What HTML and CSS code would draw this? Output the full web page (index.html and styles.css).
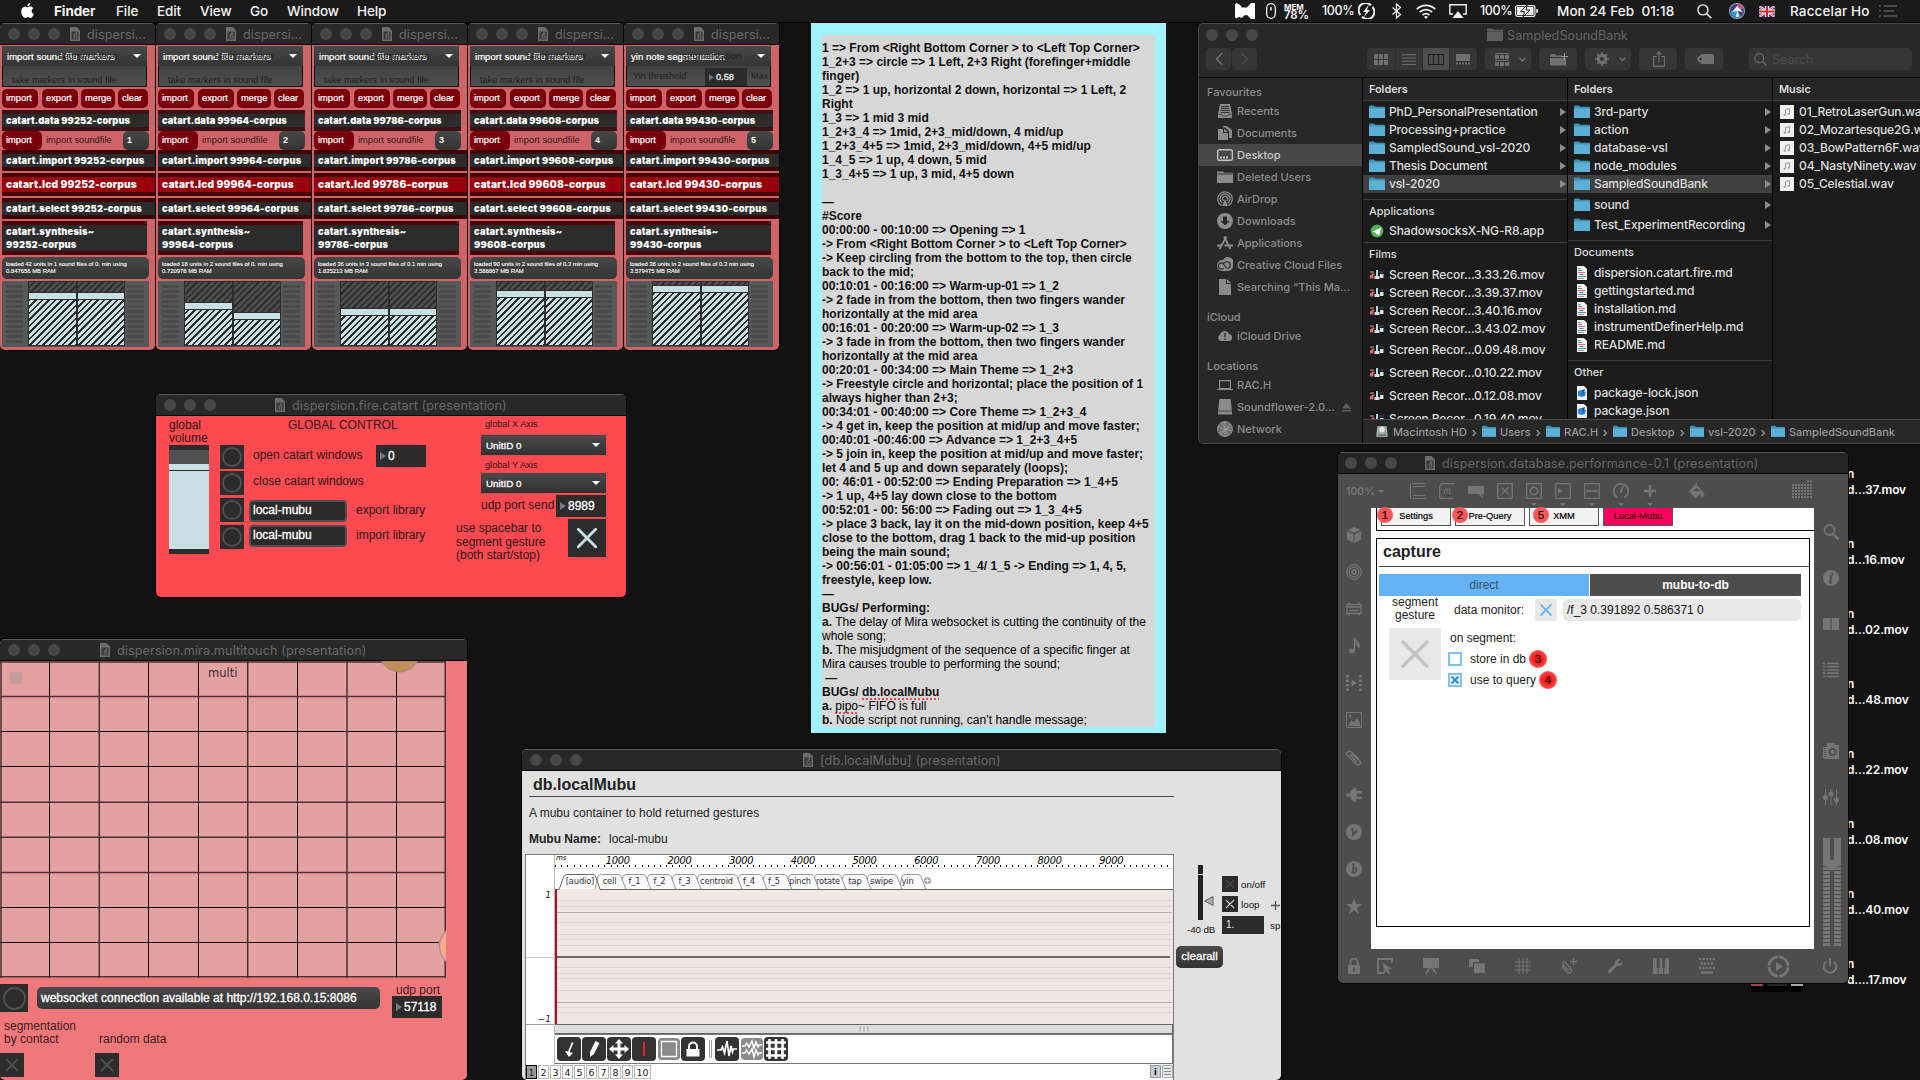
FILE: index.html
```html
<!DOCTYPE html>
<html lang="en">
<head>
<meta charset="utf-8">
<title>Desktop</title>
<link rel="stylesheet" href="styles.css">
</head>
<body>
<svg class="sprite" aria-hidden="true">
  <symbol id="doc" viewBox="0 0 10 14"><path d="M0 0h6.500L10 3.500V14H0z" fill="#6d6d6d"/><path d="M1.500 4.500h7v8h-7z" fill="#3a3a3a"/><path d="M6.500 5 4 9M5.500 8.500a1.500 1.500 0 1 1-1.500 1.500c0-1.500 3-2 2.500-4" fill="none" stroke="#777" stroke-width=".8"/></symbol>
  <symbol id="x" viewBox="0 0 24 24"><path d="M6.500 6.500l11 11M17.500 6.500l-11 11" fill="none" stroke="currentColor" stroke-width="1.800" stroke-linecap="round"/></symbol>
  <symbol id="folder" viewBox="0 0 16 14"><path d="M0 1.500Q0 .5 1 .5h4l1.500 1.300H15q1 0 1 1V13H0z" fill="#3d93b8"/><path d="M0 3.500h16V13H0z" fill="#5cb0d6"/></symbol>
  <symbol id="gfolder" viewBox="0 0 16 14"><path d="M0 1.500Q0 .5 1 .5h4l1.500 1.300H16V13H0z" fill="#5f5f5f"/><path d="M0 3.500h16" stroke="#444" stroke-width=".8"/></symbol>
  <symbol id="mov" viewBox="0 0 14 10"><path d="M0 0h14v9H0z" fill="#111"/><path d="M0 1h4v2H0z" fill="#8a5557"/><path d="M0 5h3.500v3.500H0zM1.500 3.500h3v1.500h-3z" fill="#d9686c"/><path d="M6 0h2v6H6z" fill="#a6e5ec"/><path d="M4.500 6h5v3h-5zM10 4h3.500v4H10z" fill="#ddd"/><path d="M9 .5h5v3H9z" fill="#333"/></symbol>
  <symbol id="wav" viewBox="0 0 14 14"><path d="M0 0h14v14H0z" fill="#efefef"/><path d="M5.500 9.700V4.500l4-.8v5.200" fill="none" stroke="#999"/><circle cx="4.700" cy="9.800" r="1.100" fill="#999"/><circle cx="8.700" cy="9" r="1.100" fill="#999"/></symbol>
  <symbol id="md" viewBox="0 0 10 14"><path d="M0 0h7l3 3v11H0z" fill="#f2f2f2"/><path d="M1 2.500h3M1 12.500h6" stroke="#999"/><path d="M1 4.500h4M1 10.500h8" stroke="#3a9aa8"/><path d="M1 6.500h7" stroke="#e2666a"/><path d="M2.500 8.500h4" stroke="#7a63d8"/></symbol>
  <symbol id="json" viewBox="0 0 10 14"><path d="M0 0h7l3 3v11H0z" fill="#f2f2f2"/><path d="M1 5l3-1 5 2-1 4-3 1-4-1z" fill="#2b84dd"/><path d="M5 4l3-1-2 6z" fill="#174f93"/></symbol>
  <symbol id="play" viewBox="0 0 6 8"><path d="M0 0l6 4-6 4z" fill="currentColor"/></symbol>
  <symbol id="down" viewBox="0 0 8 4"><path d="M0 0h8L4 4z" fill="currentColor"/></symbol>
</svg>

<header class="menubar">
  <svg class="apple" viewBox="0 0 13 15"><path d="M9.200 0c.1 1.700-1.200 3.200-2.800 3.300C6.200 1.700 7.600.2 9.200 0zM6.700 4.300c.5 0 1.400-.7 2.700-.7 1.200 0 2.300.7 2.900 1.600-2.500 1.500-2 4.800.6 5.800-.8 2-2 3.900-3.400 3.900-1 0-1.300-.6-2.600-.6s-1.700.6-2.600.6C2.400 14.900.2 11.600.2 8.500c0-3 2-4.800 3.800-4.800 1.200 0 2.100.6 2.700.6z" fill="#fff"/></svg>
  <nav class="menus"><b class="m1">Finder</b><span class="m2">File</span><span class="m3">Edit</span><span class="m4">View</span><span class="m5">Go</span><span class="m6">Window</span><span>Help</span></nav>
  <div class="status">
    <svg class="s-cam" width="20" height="16" viewBox="0 0 20 16"><path d="M0 1.500L1.500 0 5 2l2 2.500h5L16 0h4v16h-4l-4-4-3 .5L7 15l-3-1-3 1.500L0 14z" fill="#fff"/></svg>
    <svg class="s-mouse" width="10" height="16" viewBox="0 0 10 16"><rect x=".7" y=".7" width="8.600" height="14.600" rx="4.300" fill="none" stroke="#eee" stroke-width="1.300"/><path d="M5 4v3.500" stroke="#eee" stroke-width="1.500"/></svg>
    <span class="mem"><span>MEM</span><span>78%</span></span>
    <span class="pct p1">100%</span>
    <svg class="s-bolt" width="17" height="16" viewBox="0 0 17 16"><path d="M13 2.200A6.800 6.800 0 0 0 2.500 12M4 13.800A6.800 6.800 0 0 0 14.500 4" fill="none" stroke="#eee" stroke-width="2"/><path d="M11 1.500L5 9h3l-2.500 5.500L12 7H9z" fill="#eee"/></svg>
    <svg class="s-bt" width="11" height="16" viewBox="0 0 11 16"><path d="M1.500 4.500l8 7-4 3.500V1l4 3.500-8 7" fill="none" stroke="#eee" stroke-width="1.200"/></svg>
    <svg class="s-wifi" width="20" height="15" viewBox="0 0 20 15"><g fill="none" stroke="#eee" stroke-width="1.800"><path d="M.8 5.200a13 13 0 0 1 18.400 0M3.800 8.200a8.800 8.800 0 0 1 12.400 0M6.600 11a4.800 4.800 0 0 1 6.800 0"/></g><path d="M10 15l-2-2.200a3 3 0 0 1 4 0z" fill="#eee"/></svg>
    <svg class="s-air" width="18" height="14" viewBox="0 0 18 14"><path d="M4 10H.8V.8h16.400V10H14" fill="none" stroke="#eee" stroke-width="1.400"/><path d="M9 7l5.500 7h-11z" fill="#eee"/></svg>
    <span class="pct p2">100%</span>
    <svg class="s-bat" width="23" height="12" viewBox="0 0 23 12"><rect x=".6" y=".6" width="19.300" height="10.800" rx="2" fill="none" stroke="#eee" stroke-width="1.200"/><path d="M21.200 4a2 2 0 0 1 0 4z" fill="#eee"/><path d="M2 2h16.500v8H2z" fill="#eee"/><path d="M12 0L5.500 6.700h4L8 12l7-7h-4z" fill="#eee" stroke="#1a1a1a"/></svg>
    <span class="clock">Mon 24 Feb&nbsp; 01:18</span>
    <svg class="s-find" width="15" height="15" viewBox="0 0 15 15"><circle cx="5.900" cy="5.900" r="5" fill="none" stroke="#eee" stroke-width="1.400"/><path d="M9.500 9.500l4.800 4.800" stroke="#eee" stroke-width="1.600"/></svg>
    <svg class="s-siri" width="16" height="16" viewBox="0 0 16 16"><circle cx="8" cy="8" r="8" fill="#9ba0b8"/><circle cx="8" cy="8" r="7" fill="#3d3f7c"/><path d="M8 1a7 7 0 0 1 6.500 4.500L8 8z" fill="#c04f88"/><path d="M1.500 8.500L8 8l4 5.500a7 7 0 0 1-8 0z" fill="#2c9fc8"/><path d="M8 3l6 6-5-1 1 6H7l1-6-5 1z" fill="#e8f2fa"/></svg>
    <svg class="s-flag" width="16" height="11" viewBox="0 0 16 11"><path d="M0 0h16v11H0z" fill="#2a3f8f"/><path d="M0 0l16 11M16 0L0 11" stroke="#fff" stroke-width="2.200"/><path d="M0 0l16 11M16 0L0 11" stroke="#d22" stroke-width=".8"/><path d="M8 0v11M0 5.500h16" stroke="#fff" stroke-width="4"/><path d="M8 0v11M0 5.500h16" stroke="#d8202f" stroke-width="2.200"/></svg>
    <span class="user">Raccelar Ho</span>
    <svg class="s-list" width="18" height="12" viewBox="0 0 18 12"><path d="M0 1h2M0 6h2M0 11h2M4.500 1H18M4.500 6H15M4.500 11H18" stroke="#5a5a5a" stroke-width="1.600"/></svg>
  </div>
</header>

<main class="desktop">

<section class="win catart" style="left:0">
  <div class="bar"><i></i><i></i><i></i><svg class="doc"><use href="#doc"/></svg><span>dispersi...</span></div>
  <div class="cbody">
    <div class="menu"><span>import sound file markers</span><em>segmentation</em><svg><use href="#down"/></svg></div>
    <div class="mbox"><span>take markers in sound file</span></div>
    <div class="btns"><b>import</b><b>export</b><b>merge</b><b>clear</b></div>
    <div class="strip s1">catart.data 99252-corpus</div>
    <div class="imp"><b>import</b><span>import soundfile</span><strong>1</strong></div>
    <div class="strip wide">catart.import 99252-corpus</div>
    <div class="strip wide lcd">catart.lcd 99252-corpus</div>
    <div class="strip wide">catart.select 99252-corpus</div>
    <div class="strip syn">catart.synthesis~<br>99252-corpus</div>
    <div class="info">loaded 42 units in 1 sound files of 0. min using<br>0.847656 MB RAM</div>
    <div class="mix"><i class="lad"></i><div class="sl"><u style="height:10px"></u></div><div class="sl"><u style="height:10px"></u></div><i class="lad"></i></div>
  </div>
</section>

<section class="win catart" style="left:156px">
  <div class="bar"><i></i><i></i><i></i><svg class="doc"><use href="#doc"/></svg><span>dispersi...</span></div>
  <div class="cbody">
    <div class="menu"><span>import sound file markers</span><em>segmentation</em><svg><use href="#down"/></svg></div>
    <div class="mbox"><span>take markers in sound file</span></div>
    <div class="btns"><b>import</b><b>export</b><b>merge</b><b>clear</b></div>
    <div class="strip s1">catart.data 99964-corpus</div>
    <div class="imp"><b>import</b><span>import soundfile</span><strong>2</strong></div>
    <div class="strip wide">catart.import 99964-corpus</div>
    <div class="strip wide lcd">catart.lcd 99964-corpus</div>
    <div class="strip wide">catart.select 99964-corpus</div>
    <div class="strip syn">catart.synthesis~<br>99964-corpus</div>
    <div class="info">loaded 18 units in 2 sound files of 0. min using<br>0.720978 MB RAM</div>
    <div class="mix"><i class="lad"></i><div class="sl"><u style="height:20px"></u></div><div class="sl"><u style="height:30px"></u></div><i class="lad"></i></div>
  </div>
</section>

<section class="win catart" style="left:312px">
  <div class="bar"><i></i><i></i><i></i><svg class="doc"><use href="#doc"/></svg><span>dispersi...</span></div>
  <div class="cbody">
    <div class="menu"><span>import sound file markers</span><em>segmentation</em><svg><use href="#down"/></svg></div>
    <div class="mbox"><span>take markers in sound file</span></div>
    <div class="btns"><b>import</b><b>export</b><b>merge</b><b>clear</b></div>
    <div class="strip s1">catart.data 99786-corpus</div>
    <div class="imp"><b>import</b><span>import soundfile</span><strong>3</strong></div>
    <div class="strip wide">catart.import 99786-corpus</div>
    <div class="strip wide lcd">catart.lcd 99786-corpus</div>
    <div class="strip wide">catart.select 99786-corpus</div>
    <div class="strip syn">catart.synthesis~<br>99786-corpus</div>
    <div class="info">loaded 36 units in 3 sound files of 0.1 min using<br>1.835213 MB RAM</div>
    <div class="mix"><i class="lad"></i><div class="sl"><u style="height:26px"></u></div><div class="sl"><u style="height:26px"></u></div><i class="lad"></i></div>
  </div>
</section>

<section class="win catart" style="left:468px">
  <div class="bar"><i></i><i></i><i></i><svg class="doc"><use href="#doc"/></svg><span>dispersi...</span></div>
  <div class="cbody">
    <div class="menu"><span>import sound file markers</span><em>segmentation</em><svg><use href="#down"/></svg></div>
    <div class="mbox"><span>take markers in sound file</span></div>
    <div class="btns"><b>import</b><b>export</b><b>merge</b><b>clear</b></div>
    <div class="strip s1">catart.data 99608-corpus</div>
    <div class="imp"><b>import</b><span>import soundfile</span><strong>4</strong></div>
    <div class="strip wide">catart.import 99608-corpus</div>
    <div class="strip wide lcd">catart.lcd 99608-corpus</div>
    <div class="strip wide">catart.select 99608-corpus</div>
    <div class="strip syn">catart.synthesis~<br>99608-corpus</div>
    <div class="info">loaded 90 units in 2 sound files of 0.3 min using<br>3.588867 MB RAM</div>
    <div class="mix"><i class="lad"></i><div class="sl"><u style="height:8px"></u></div><div class="sl"><u style="height:8px"></u></div><i class="lad"></i></div>
  </div>
</section>

<section class="win catart" style="left:624px">
  <div class="bar"><i></i><i></i><i></i><svg class="doc"><use href="#doc"/></svg><span>dispersi...</span></div>
  <div class="cbody">
    <div class="menu"><span>yin note segmentation</span><em>segmentation</em><svg><use href="#down"/></svg></div>
    <div class="mbox yin"><span>Yin threshold</span><b><svg><use href="#play"/></svg>0.58</b><span>Max</span></div>
    <div class="btns"><b>import</b><b>export</b><b>merge</b><b>clear</b></div>
    <div class="strip s1">catart.data 99430-corpus</div>
    <div class="imp"><b>import</b><span>import soundfile</span><strong>5</strong></div>
    <div class="strip wide">catart.import 99430-corpus</div>
    <div class="strip wide lcd">catart.lcd 99430-corpus</div>
    <div class="strip wide">catart.select 99430-corpus</div>
    <div class="strip syn">catart.synthesis~<br>99430-corpus</div>
    <div class="info">loaded 38 units in 2 sound files of 0.3 min using<br>3.579475 MB RAM</div>
    <div class="mix"><i class="lad"></i><div class="sl"><u style="height:3px"></u></div><div class="sl"><u style="height:3px"></u></div><i class="lad"></i></div>
  </div>
</section>

<section class="win fire">
  <div class="bar"><i></i><i></i><i></i><svg class="doc"><use href="#doc"/></svg><span>dispersion.fire.catart (presentation)</span></div>
  <div class="fbody">
    <div class="fa"><p>global<br>volume</p><div class="vol"><i></i><b></b></div></div>
    <div class="fb"><i class="bang"></i><i class="bang"></i><i class="bang"></i><i class="bang"></i></div>
    <div class="fc">
      <h2>GLOBAL CONTROL</h2>
      <div class="r1"><span>open catart windows</span><b class="num"><svg><use href="#play"/></svg>0</b></div>
      <div class="r2"><span>close catart windows</span></div>
      <div class="r3"><b class="msg">local-mubu</b><span>export library</span></div>
      <div class="r4"><b class="msg">local-mubu</b><span>import library</span></div>
    </div>
    <div class="fd">
      <small class="gx">global X Axis</small>
      <div class="umenu">UnitID 0<svg><use href="#down"/></svg></div>
      <small class="gy">global Y Axis</small>
      <div class="umenu">UnitID 0<svg><use href="#down"/></svg></div>
      <div class="port"><span>udp port send</span><b class="num"><svg><use href="#play"/></svg>8989</b></div>
      <div class="space"><p>use spacebar to<br>segment gesture<br>(both start/stop)</p><svg class="tog"><use href="#x"/></svg></div>
    </div>
  </div>
</section>

<section class="win mira">
  <div class="bar"><i></i><i></i><i></i><svg class="doc"><use href="#doc"/></svg><span>dispersion.mira.multitouch (presentation)</span></div>
  <div class="pad">
    <svg width="446" height="317" viewBox="0 0 446 317">
      <path d="M0 0h446v317H0z" fill="#e3a1a2"/>
      <rect x="10" y="11" width="12" height="12" rx="2" fill="#c19a9a" stroke="#cf9d9e"/>
      <g stroke="#170c0c"><path d="M49.500 0v317M148.500 0v317M198.500 0v317M297.500 0v317M396.500 0v317"/><path d="M0 70.500h446M0 105.500h446M0 246.500h446M0 281.500h446"/></g>
      <g stroke="#4b2f31" stroke-width="1.500"><path d="M1 0v317M99.300 0v317M247.700 0v317M347 0v317M445.200 0v317"/><path d="M0 1h446M0 35.500h446M0 141.200h446M0 176.300h446M0 211.500h446M0 315.800h446"/></g>
      <circle cx="399.500" cy="-9" r="20" fill="#c18d5c" stroke="#9b8a80"/>
      <circle cx="459.500" cy="285" r="20" fill="#ffac8c" stroke="#b0908c" stroke-width="1.500"/>
    </svg>
    <span>multi</span>
  </div>
  <div class="mrow"><i class="bang"></i><b class="ws">websocket connection available at http://192.168.0.15:8086</b><div><span>udp port</span><b class="num"><svg><use href="#play"/></svg>57118</b></div></div>
  <div class="mrow2"><div><p>segmentation<br>by contact</p><svg class="tog"><use href="#x"/></svg></div><div class="rnd"><p><br>random data</p><svg class="tog"><use href="#x"/></svg></div></div>
</section>

<section class="note"><div><b>1 =&gt; From &lt;Right Bottom Corner &gt; to &lt;Left Top Corner&gt;
1_2+3 =&gt; circle =&gt; 1 Left, 2+3 Right (forefinger+middle
finger)
1_2 =&gt; 1 up, horizontal 2 down, horizontal =&gt; 1 Left, 2
Right
1_3 =&gt; 1 mid 3 mid
1_2+3_4 =&gt; 1mid, 2+3_mid/down, 4 mid/up
1_2+3_4+5 =&gt; 1mid, 2+3_mid/down, 4+5 mid/up
1_4_5 =&gt; 1 up, 4 down, 5 mid
1_3_4+5 =&gt; 1 up, 3 mid, 4+5 down

—
#Score
00:00:00 - 00:10:00 =&gt; Opening =&gt; 1
-&gt; From &lt;Right Bottom Corner &gt; to &lt;Left Top Corner&gt;
-&gt; Keep circling from the bottom to the top, then circle
back to the mid;
00:10:01 - 00:16:00 =&gt; Warm-up-01 =&gt; 1_2
-&gt; 2 fade in from the bottom, then two fingers wander
horizontally at the mid area
00:16:01 - 00:20:00 =&gt; Warm-up-02 =&gt; 1_3
-&gt; 3 fade in from the bottom, then two fingers wander
horizontally at the mid area
00:20:01 - 00:34:00 =&gt; Main Theme =&gt; 1_2+3
-&gt; Freestyle circle and horizontal; place the position of 1
always higher than 2+3;
00:34:01 - 00:40:00 =&gt; Core Theme =&gt; 1_2+3_4
-&gt; 4 get in, keep the position at mid/up and move faster;
00:40:01 -00:46:00 =&gt; Advance =&gt; 1_2+3_4+5
-&gt; 5 join in, keep the position at mid/up and move faster;
let 4 and 5 up and down separately (loops);
00: 46:01 - 00:52:00 =&gt; Ending Preparation =&gt; 1_4+5
-&gt; 1 up, 4+5 lay down close to the bottom
00:52:01 - 00: 56:00 =&gt; Fading out =&gt; 1_3_4+5
-&gt; place 3 back, lay it on the mid-down position, keep 4+5
close to the bottom, drag 1 back to the mid-up position
being the main sound;
-&gt; 00:56:01 - 01:05:00 =&gt; 1_4/ 1_5 -&gt; Ending =&gt; 1, 4, 5,
freestyle, keep low.
—
BUGs/ Performing:
a.</b> The delay of Mira websocket is cutting the continuity of the
whole song;
<b>b.</b> The misjudgment of the sequence of a specific finger at
Mira causes trouble to performing the sound;
 <b>—
BUGs/ <u>db.localMubu</u>
a.</b> <u>pipo</u>~ FIFO is full
<b>b.</b> Node script not running, can’t handle message;</div></section>

<section class="win finder">
  <div class="ftitle"><i></i><i></i><i></i><svg width="16" height="14"><use href="#gfolder"/></svg><span>SampledSoundBank</span></div>
  <div class="ftools">
    <span class="tb back"><svg width="8" height="14" viewBox="0 0 8 14"><path d="M7 1.500L1.500 7 7 12.500" fill="none" stroke="#6f6f6f" stroke-width="1.600"/></svg></span>
    <span class="tb fwd"><svg width="8" height="14" viewBox="0 0 8 14"><path d="M1 1.500L6.500 7 1 12.500" fill="none" stroke="#4a4a4a" stroke-width="1.600"/></svg></span>
    <div class="views">
      <span><svg width="14" height="11" viewBox="0 0 14 11"><path d="M0 0h4v5H0zM5 0h4v5H5zM10 0h4v5h-4zM0 6h4v5H0zM5 6h4v5H5zM10 6h4v5h-4z" fill="#707070"/></svg></span>
      <span><svg width="14" height="11" viewBox="0 0 14 11"><path d="M0 .7h14M0 4h14M0 7.200h14M0 10.400h14" stroke="#707070"/></svg></span>
      <span class="on"><svg width="16" height="11" viewBox="0 0 16 11"><path d="M.5.5h15v10H.5zM5.500 0v11M10.500 0v11" fill="none" stroke="#1d1d1d"/></svg></span>
      <span><svg width="14" height="11" viewBox="0 0 14 11"><path d="M0 0h14v7H0zM0 8.500h2v2H0zM3 8.500h2v2H3zM6 8.500h2v2H6zM9 8.500h2v2H9zM12 8.500h2v2h-2z" fill="#707070"/></svg></span>
    </div>
    <span class="tb grp"><svg width="31" height="13" viewBox="0 0 31 13"><path d="M0 0h14v1H0zM0 2h4v4H0zM5 2h4v4H5zM10 2h4v4h-4zM0 7h14v1H0zM0 9h4v4H0zM5 9h4v4H5zM10 9h4v4h-4z" fill="#707070"/><path d="M24.500 5l3 3 3-3" fill="none" stroke="#707070" stroke-width="1.300"/></svg></span>
    <span class="tb nf"><svg width="18" height="13" viewBox="0 0 18 13"><path d="M0 2q0-1 1-1h4l1 1.500h6V5h4v7.500H0z" fill="#707070"/><path d="M0 4.500h12" stroke="#333"/><path d="M14.500 0v7M11 3.500h7" stroke="#999"/></svg></span>
    <span class="tb grp"><svg width="31" height="14" viewBox="0 0 31 14"><circle cx="7" cy="7" r="3.800" fill="none" stroke="#707070" stroke-width="3"/><path d="M7 0v14M0 7h14M2 2l10 10M12 2L2 12" stroke="#707070" stroke-width="1.600"/><circle cx="7" cy="7" r="2" fill="#333"/><path d="M24.500 5.500l3 3 3-3" fill="none" stroke="#707070" stroke-width="1.300"/></svg></span>
    <span class="tb nf"><svg width="12" height="16" viewBox="0 0 12 16"><path d="M4 5.500H.6v9.900h10.800V5.500H8M6 11V1M3.500 3.500L6 1l2.500 2.500" fill="none" stroke="#707070" stroke-width="1.100"/></svg></span>
    <span class="tb nf"><svg width="17" height="10" viewBox="0 0 17 10"><path d="M5 0h10.500Q17 0 17 1.500v7q0 1.500-1.500 1.500H5L1 7Q-.5 5 1 3z" fill="#707070"/><circle cx="3.700" cy="5" r="1.200" fill="#333"/></svg></span>
    <div class="search"><svg width="13" height="13" viewBox="0 0 13 13"><circle cx="5.200" cy="5.200" r="4.500" fill="none" stroke="#6a6a6a" stroke-width="1.200"/><path d="M8.500 8.500l4 4" stroke="#6a6a6a" stroke-width="1.300"/></svg>Search</div>
  </div>
  <div class="fmain">
    <aside>
      <h4>Favourites</h4>
      <p><svg viewBox="0 0 16 16"><path d="M3 1h10l2 10v4H1v-4z" fill="#8b8b8b"/><path d="M4 3.500h8M4 5.500h8M3.500 7.500h9M3.500 9.500h9" stroke="#333"/><path d="M1.500 11.500h3l1 1.500h5l1-1.500h3" fill="none" stroke="#333" stroke-width=".8"/></svg>Recents</p>
      <p><svg viewBox="0 0 16 16"><path d="M1 4h5v4h5v7H1zM7 3.500L11 7H7zM6 1h4l5 4v8h-3V6L8 2.500H6z" fill="#8b8b8b"/></svg>Documents</p>
      <p class="on"><svg viewBox="0 0 16 16"><rect x=".7" y="2.700" width="14.600" height="10.600" rx="1.500" fill="none" stroke="#c4c4c4" stroke-width="1.400"/><path d="M3 9.500h2v2H3zM6 9.500h2v2H6zM9 9.500h2v2H9z" fill="#c4c4c4"/></svg>Desktop</p>
      <p><svg viewBox="0 0 16 16"><path d="M0 2.500h6l1.500 1.200H16V14H0z" fill="#8b8b8b"/><path d="M0 5h16" stroke="#333"/></svg>Deleted Users</p>
      <p><svg viewBox="0 0 16 16"><g fill="none" stroke="#8b8b8b" stroke-width="1.300"><path d="M4.500 14.500a7.300 7.300 0 1 1 7 0M5.300 12a5 5 0 1 1 5.400 0M6.500 9.800a2.600 2.600 0 1 1 3 0"/></g><path d="M8 8l3 7H5z" fill="#8b8b8b"/></svg>AirDrop</p>
      <p><svg viewBox="0 0 16 16"><circle cx="8" cy="8" r="8" fill="#8b8b8b"/><path d="M6 3.500h4V8h2.500L8 12.500 3.500 8H6z" fill="#282828"/></svg>Downloads</p>
      <p><svg viewBox="0 0 16 16"><path d="M9.500 1.500L2.500 14M7 1.500L13.500 14M0 10.500h5M7.500 10.500H16" fill="none" stroke="#8b8b8b" stroke-width="1.900"/></svg>Applications</p>
      <p><svg viewBox="0 0 16 16"><path d="M0 8.500A5.500 5.500 0 0 1 6 3a5 5 0 0 1 10 5.500A5 5 0 0 1 11 14H5a5 5 0 0 1-5-5.500z" fill="#8b8b8b"/><path d="M10 11.500L6 6.500a3 3 0 1 0 0 5h1M6.500 7.500a3.400 3.400 0 1 1 4 4" fill="none" stroke="#2c2c2c" stroke-width="1.200"/></svg>Creative Cloud Files</p>
      <p><svg viewBox="0 0 16 16"><path d="M2 0h7v5h5v11H2zM10 0l4 4h-4z" fill="#8b8b8b"/></svg>Searching “This Ma...</p>
      <h4 class="ic">iCloud</h4>
      <p><svg viewBox="0 0 16 16"><path d="M3.500 13A3.300 3.300 0 0 1 2.800 7 5 5 0 0 1 12.200 6 3.600 3.600 0 0 1 12.500 13z" fill="#8b8b8b"/><path d="M8 5v4M8 10.500v1.500" stroke="#222" stroke-width="1.300"/></svg>iCloud Drive</p>
      <h4 class="ic">Locations</h4>
      <p><svg viewBox="0 0 16 16"><path d="M2.600 3.600h10.800v8H2.600zM0 12.500h16" fill="none" stroke="#8b8b8b" stroke-width="1.200"/></svg>RAC.H</p>
      <p><svg viewBox="0 0 16 16"><path d="M2.500 0h11L15 12v3.500H1V12z" fill="#8b8b8b"/><path d="M1 12h14" stroke="#333" stroke-width=".8"/></svg>Soundflower-2.0...<svg class="ej" viewBox="0 0 9 9"><path d="M4.500 0L9 5.500H0zM0 7h9v1.500H0z" fill="#5f5f5f"/></svg></p>
      <p><svg viewBox="0 0 16 16"><circle cx="8" cy="8" r="7.500" fill="#6f6f6f" stroke="#8b8b8b"/><path d="M1 6l14 4M5 1l6 14M13 3L4 14M8 0v16M2 12l12-6" stroke="#a5a5a5" stroke-width=".7"/></svg>Network</p>
    </aside>
    <div class="cols">
      <div class="colset">
        <div class="col c1">
          <h5 class="hd">Folders</h5>
          <p><svg><use href="#folder"/></svg>PhD_PersonalPresentation<svg class="ar"><use href="#play"/></svg></p>
          <p><svg><use href="#folder"/></svg>Processing+practice<svg class="ar"><use href="#play"/></svg></p>
          <p><svg><use href="#folder"/></svg>SampledSound_vsl-2020<svg class="ar"><use href="#play"/></svg></p>
          <p><svg><use href="#folder"/></svg>Thesis Document<svg class="ar"><use href="#play"/></svg></p>
          <p class="sel"><svg><use href="#folder"/></svg>vsl-2020<svg class="ar"><use href="#play"/></svg></p>
          <h5 class="sub a1">Applications</h5>
          <p class="app"><svg viewBox="0 0 16 16"><circle cx="8" cy="8" r="7.300" fill="#4fae53"/><path d="M2.500 8.500L13 4l-2.500 9-2.700-2L7 13l-.7-3z" fill="#fff"/></svg>ShadowsocksX-NG-R8.app</p>
          <h5 class="sub a2">Films</h5>
          <p class="mv"><svg><use href="#mov"/></svg>Screen Recor...3.33.26.mov</p>
          <p class="mv"><svg><use href="#mov"/></svg>Screen Recor...3.39.37.mov</p>
          <p class="mv"><svg><use href="#mov"/></svg>Screen Recor...3.40.16.mov</p>
          <p class="mv"><svg><use href="#mov"/></svg>Screen Recor...3.43.02.mov</p>
          <p class="mv g3"><svg><use href="#mov"/></svg>Screen Recor...0.09.48.mov</p>
          <p class="mv g5"><svg><use href="#mov"/></svg>Screen Recor...0.10.22.mov</p>
          <p class="mv g5"><svg><use href="#mov"/></svg>Screen Recor...0.12.08.mov</p>
          <p class="mv g5"><svg><use href="#mov"/></svg>Screen Recor...0.19.40.mov</p>
        </div>
        <div class="col c2">
          <h5 class="hd">Folders</h5>
          <p><svg><use href="#folder"/></svg>3rd-party<svg class="ar"><use href="#play"/></svg></p>
          <p><svg><use href="#folder"/></svg>action<svg class="ar"><use href="#play"/></svg></p>
          <p><svg><use href="#folder"/></svg>database-vsl<svg class="ar"><use href="#play"/></svg></p>
          <p><svg><use href="#folder"/></svg>node_modules<svg class="ar"><use href="#play"/></svg></p>
          <p class="sel"><svg><use href="#folder"/></svg>SampledSoundBank<svg class="ar"><use href="#play"/></svg></p>
          <p class="g3"><svg><use href="#folder"/></svg>sound<svg class="ar"><use href="#play"/></svg></p>
          <p class="g2"><svg><use href="#folder"/></svg>Test_ExperimentRecording<svg class="ar"><use href="#play"/></svg></p>
          <h5 class="sub b1">Documents</h5>
          <p><svg><use href="#md"/></svg>dispersion.catart.fire.md</p>
          <p><svg><use href="#md"/></svg>gettingstarted.md</p>
          <p><svg><use href="#md"/></svg>installation.md</p>
          <p><svg><use href="#md"/></svg>instrumentDefinerHelp.md</p>
          <p><svg><use href="#md"/></svg>README.md</p>
          <h5 class="sub b1">Other</h5>
          <p><svg><use href="#json"/></svg>package-lock.json</p>
          <p><svg><use href="#json"/></svg>package.json</p>
        </div>
        <div class="col c3">
          <h5 class="hd">Music</h5>
          <p><svg><use href="#wav"/></svg>01_RetroLaserGun.wav</p>
          <p><svg><use href="#wav"/></svg>02_Mozartesque2G.wav</p>
          <p><svg><use href="#wav"/></svg>03_BowPattern6F.wav</p>
          <p><svg><use href="#wav"/></svg>04_NastyNinety.wav</p>
          <p><svg><use href="#wav"/></svg>05_Celestial.wav</p>
        </div>
      </div>
      <footer>
        <span class="w1"><svg viewBox="0 0 12 14"><path d="M1 1h10l1 8v4H0V9z" fill="#9aa5a5"/><circle cx="6" cy="5" r="3" fill="#dfe6e6"/><path d="M2 11h8" stroke="#444"/></svg>Macintosh HD</span><em>›</em>
        <span class="w2"><svg><use href="#folder"/></svg>Users</span><em>›</em>
        <span class="w3"><svg><use href="#folder"/></svg>RAC.H</span><em>›</em>
        <span class="w4"><svg><use href="#folder"/></svg>Desktop</span><em>›</em>
        <span class="w5"><svg><use href="#folder"/></svg>vsl-2020</span><em>›</em>
        <span class="w6"><svg><use href="#folder"/></svg>SampledSoundBank</span>
      </footer>
    </div>
  </div>
</section>

<ul class="icons">
  <li>n<br>d...37.mov</li><li>n<br>d...16.mov</li><li>n<br>d...02.mov</li><li>n<br>d...48.mov</li><li>n<br>d...22.mov</li><li>n<br>d...08.mov</li><li>n<br>d...40.mov</li><li>n<br>d....17.mov</li>
</ul>
<div class="thumb"><i></i><b></b><u></u></div>

<section class="win perf">
  <div class="bar"><i></i><i></i><i></i><svg class="doc"><use href="#doc"/></svg><span>dispersion.database.performance-0.1 (presentation)</span></div>
  <div class="ptools">
    <span class="zoom">100%</span><svg class="zd"><use href="#down"/></svg>
    <svg class="pi" viewBox="0 0 16 22"><path d="M.5 3v16M2.500 3.500h13M2.500 18.500h13M3 6.500h12M3 15.500h12" stroke="#757575"/></svg>
    <svg class="pi" viewBox="0 0 16 22"><path d="M16 3.700H3L.7 6v12.300H14" fill="none" stroke="#757575" stroke-width="1.300"/><path d="M5 14l1.300-5.500M6 10q2.500-2.500 2.500 0L7.500 14M8.500 10q2.500-2.500 2.500 0l-1 4h1.500" fill="none" stroke="#757575"/></svg>
    <svg class="pi" viewBox="0 0 16 22"><path d="M0 6h16v8h-1.500v4L10.500 14H0z" fill="#757575"/></svg>
    <svg class="pi" viewBox="0 0 16 22"><path d="M.7 3.700h14.600v14.600H.7zM4.500 7.500l7 7M11.500 7.500l-7 7" fill="none" stroke="#757575" stroke-width="1.300"/></svg>
    <svg class="pi dn" viewBox="0 0 16 27"><path d="M.7 3.700h14.600v14.600H.7z" fill="none" stroke="#757575" stroke-width="1.300"/><circle cx="8" cy="11" r="3.700" fill="none" stroke="#757575" stroke-width="1.500"/><path d="M5 23h6l-3 3z" fill="#757575"/></svg>
    <svg class="pi dn" viewBox="0 0 16 27"><path d="M.7 3.700h14.600v14.600H.7z" fill="none" stroke="#757575" stroke-width="1.300"/><path d="M3 8l5 3-5 3zM5 23h6l-3 3z" fill="#757575"/></svg>
    <svg class="pi dn" viewBox="0 0 16 27"><path d="M.7 3.700h14.600v14.600H.7zM2 11h12" fill="none" stroke="#757575" stroke-width="1.300"/><path d="M5 23h6l-3 3z" fill="#757575"/></svg>
    <svg class="pi dn" viewBox="0 0 16 27"><path d="M4.500 17.500a7.300 7.300 0 1 1 7 0M7.500 13L10 6" fill="none" stroke="#757575" stroke-width="1.800"/><path d="M5 23h6l-3 3z" fill="#757575"/></svg>
    <svg class="pi dn" viewBox="0 0 16 27"><path d="M8 5v12M2 11h12" stroke="#757575" stroke-width="2.500"/><path d="M5 23h6l-3 3z" fill="#757575"/></svg>
    <svg class="pi pb" viewBox="0 0 16 22"><path d="M1 11l7-6 6 7-7 6zM14 12q3 5 0 5t0-5M8 5V3M4 7l4-4" fill="#757575" stroke="#757575"/><path d="M4 11l4-3 4 3z" fill="#4d4d4d"/></svg>
    <svg class="pg" viewBox="0 0 20 19"><path d="M0 5h20M0 8h20M0 11h20M0 14h20M0 17h20M15 1.500h5" stroke="#757575" stroke-width="2" stroke-dasharray="2 1"/></svg>
  </div>
  <div class="pmid">
    <div class="pl">
      <svg viewBox="0 0 16 16"><path d="M8 0l6.500 3L8 6 1.500 3zM.8 4.200L7.500 7.300V16L.8 12.500zM15.200 4.200L8.500 7.300V16l6.700-3.500z" fill="#757575"/></svg>
      <svg viewBox="0 0 16 16"><g fill="none" stroke="#757575" stroke-width="1.300"><circle cx="8" cy="8" r="7.300"/><circle cx="8" cy="8" r="5"/></g><circle cx="8" cy="8" r="2" fill="none" stroke="#757575" stroke-width="1.800"/></svg>
      <svg viewBox="0 0 16 16"><path d="M1 3.500h14v9H1zM1 6h14M3 9.500h10M2 13.500h2M12 13.500h2M2 2.500h2M12 2.500h2" fill="none" stroke="#757575" stroke-width="1.300"/></svg>
      <svg viewBox="0 0 16 16"><path d="M8.500 12V0q0 3 3.500 4.500 2 2 .5 5 0-3-3-4" fill="none" stroke="#757575" stroke-width="1.500"/><ellipse cx="6" cy="13" rx="3" ry="2.300" fill="#757575"/></svg>
      <svg viewBox="0 0 16 16"><path d="M1.500 0v16M14.500 0v16" stroke="#757575" stroke-width="3" stroke-dasharray="2.500 2"/><path d="M5 8h2M5.500 4.500L11 8l-5.500 3.500z" fill="#757575"/></svg>
      <svg viewBox="0 0 16 16"><path d="M.5.500h15v15H.5z" fill="none" stroke="#757575"/><path d="M2 14l3.500-6L8 10.500 10.500 6 14 11v3z" fill="#757575"/><circle cx="4" cy="4" r="1.200" fill="#757575"/></svg>
      <svg viewBox="0 0 16 16"><path d="M13 9L7 3.500Q4 0 1.500 2T3 7l7 7q2.500 2 4 0t-1-4L7 5.500Q5 4 4.500 5.500L11 12" fill="none" stroke="#757575" stroke-width="1.300"/></svg>
      <svg viewBox="0 0 16 16"><path d="M0 6.500h4Q5 2 10 .5V4h6v2.500h-5v3h5V12h-6v3.500Q5 14 4 9.500H0z" fill="#757575"/></svg>
      <svg viewBox="0 0 16 16"><circle cx="8" cy="8" r="8" fill="#757575"/><path d="M5 5.500l1.500-.5L7 11q4-3 3.500-5.500" fill="none" stroke="#4d4d4d" stroke-width="1.800"/></svg>
      <svg viewBox="0 0 16 16"><circle cx="8" cy="8" r="8" fill="#757575"/><path d="M6 3h1.800L6.300 12q4 0 4-4 0-2-3 0" fill="none" stroke="#4d4d4d" stroke-width="1.700"/></svg>
      <svg viewBox="0 0 16 16"><path d="M8 0l2 6h6l-5 3.700L13 16l-5-3.800L3 16l2-6.300L0 6h6z" fill="#757575"/></svg>
    </div>
    <div class="canvas">
      <div class="ptabs">
        <span>Settings</span><span>Pre-Query</span><span>XMM</span><span class="lm">Local-Mubu</span>
        <em class="bd n1">1</em><em class="bd n2">2</em><em class="bd n5">5</em>
      </div>
      <div class="cap">
        <h3>capture</h3>
        <div class="dtabs"><span>direct</span><b>mubu-to-db</b></div>
        <div class="dm"><p>segment<br>gesture</p><span>data monitor:</span><svg class="t1"><use href="#x"/></svg><div>/f_3 0.391892 0.586371 0</div></div>
        <div class="os">
          <svg viewBox="0 0 52 52"><path d="M13 13l26 26M39 13L13 39" stroke="#c4c4c4" stroke-width="3.500"/></svg>
          <div><p>on segment:</p>
            <label><i></i>store in db<em class="bd big">3</em></label>
            <label><i><svg viewBox="0 0 10 10"><path d="M1.500 1.500l7 7M8.500 1.500l-7 7" stroke="#2490f0" stroke-width="2.300"/></svg></i>use to query<em class="bd big">4</em></label>
          </div>
        </div>
      </div>
    </div>
    <div class="pr">
      <svg viewBox="0 0 16 16"><circle cx="6.500" cy="6" r="5" fill="none" stroke="#757575" stroke-width="1.800"/><path d="M10 10l5.500 5.500" stroke="#757575" stroke-width="2.400"/></svg>
      <svg viewBox="0 0 16 16"><circle cx="8" cy="8" r="8" fill="#757575"/><path d="M9.500 3l-.3 2M6.500 6.500l2-.3L7 12.500h2" fill="none" stroke="#4d4d4d" stroke-width="1.800"/></svg>
      <svg viewBox="0 0 16 16"><path d="M0 2h7.500v12H0zM8.500 2H16v12H8.500z" fill="#757575"/></svg>
      <svg viewBox="0 0 16 16"><path d="M0 1.500h2.500M0 4.700h2.500M0 8h2.500M0 11.200h2.500M0 14.500h2.500M4 1.500h12M4 4.700h12M4 8h12M4 11.200h12M4 14.500h12" stroke="#757575" stroke-width="1.700"/></svg>
      <svg class="cam" viewBox="0 0 16 16"><path d="M4 0h8v2h4v14H0V4h4z" fill="#757575"/><circle cx="9.500" cy="9" r="4" fill="#4d4d4d"/><circle cx="9.500" cy="9" r="2.200" fill="#757575"/><path d="M2 5v9" stroke="#4d4d4d" stroke-width="2" stroke-dasharray="1"/></svg>
      <svg viewBox="0 0 16 16"><path d="M2.500 0v16M8 0v16M13.500 0v16" stroke="#757575"/><ellipse cx="2.500" cy="8.500" rx="2.500" ry="2.500" fill="#757575"/><circle cx="8" cy="5" r="2.500" fill="#757575"/><circle cx="13.500" cy="11" r="2.500" fill="#757575"/></svg>
      <svg class="meter" viewBox="0 0 18 108"><path d="M3.500 0v25M14.500 0v25" stroke="#757575" stroke-width="7"/><path d="M3.500 25v83M14.500 25v83" stroke="#757575" stroke-width="7" stroke-dasharray="3 1"/><circle cx="9" cy="27" r="5.500" fill="#757575"/></svg>
    </div>
  </div>
  <div class="pbot">
    <svg class="q1" viewBox="0 0 16 16"><path d="M2 7h12v9H2z" fill="#757575"/><path d="M4.500 7V4a3.500 3.500 0 0 1 7 0v3" fill="none" stroke="#757575" stroke-width="1.800"/><path d="M8 9.500V14" stroke="#4d4d4d" stroke-width="1.600"/></svg>
    <svg class="q2" viewBox="0 0 16 16"><path d="M15 5V1H1v14h6" fill="none" stroke="#757575" stroke-width="1.800"/><path d="M6 5l9 6-4 .5L14 16l-2 .5L9.500 13 7 15.500z" fill="#757575"/></svg>
    <svg class="q3" viewBox="0 0 16 16"><path d="M0 0h16v10H0z" fill="#757575"/><path d="M7.500 9L3 15.500M8.500 9l4.500 6.500" stroke="#757575" stroke-width="1.800"/></svg>
    <svg class="q4" viewBox="0 0 16 16"><path d="M0 1h10v3H4v5H0zM5 5.500h11V15H5z" fill="#757575"/></svg>
    <svg class="q5" viewBox="0 0 16 16"><path d="M4 0v16M8 0v16M12 0v16M0 4h16M0 8h16M0 12h16" stroke="#757575"/></svg>
    <svg class="q6" viewBox="0 0 16 16"><path d="M1 8l5 6q2 2 3.500.5T10 11L5 5Q3 3 2 4.500T3 8l5 5M12.500 0v7M9 3.500h7" fill="none" stroke="#757575" stroke-width="1.300"/></svg>
    <svg class="q7" viewBox="0 0 16 16"><path d="M1.500 14.500L10 6" stroke="#757575" stroke-width="3"/><path d="M14 1l-3 3 1 2 3.500-2.500q.5 6-5.500 4.500L8 6q-.5-5 6-5z" fill="#757575"/></svg>
    <svg class="q8" viewBox="0 0 16 16"><path d="M0 0h16v16H0z" fill="#757575"/><path d="M5.200 0v16M10.700 0v16" stroke="#4d4d4d"/><path d="M5.200 0v10M10.700 0v10" stroke="#4d4d4d" stroke-width="3"/></svg>
    <svg class="q9" viewBox="0 0 16 16"><path d="M0 1h16M1.500 5.500h14M0 10h16" stroke="#757575" stroke-width="2.500" stroke-dasharray="2.300 1.100"/><path d="M2 14.500h12" stroke="#757575" stroke-width="2.500"/></svg>
    <svg class="q10" viewBox="0 0 23 23"><circle cx="11.500" cy="11.500" r="9.700" fill="none" stroke="#757575" stroke-width="2.800" stroke-dasharray="13.700 1.500" stroke-dashoffset="-.8"/><path d="M9 7l7 4.500L9 16z" fill="#757575"/></svg>
    <svg class="q11" viewBox="0 0 16 16"><path d="M4 3.500a6.300 6.300 0 1 0 8 0M8 0v8" fill="none" stroke="#757575" stroke-width="2"/></svg>
  </div>
</section>

<section class="win mubu">
  <div class="bar"><i></i><i></i><i></i><svg class="doc"><use href="#doc"/></svg><span>[db.localMubu] (presentation)</span></div>
  <div class="mb">
    <div class="mleft">
      <h3>db.localMubu</h3>
      <p class="desc">A mubu container to hold returned gestures</p>
      <p class="nm"><b>Mubu Name:</b>local-mubu</p>
      <div class="ed">
        <div class="gut"><span>1</span><span>−1</span></div>
        <div class="main">
          <div class="ruler"><small>ms</small><span>1000</span><span>2000</span><span>3000</span><span>4000</span><span>5000</span><span>6000</span><span>7000</span><span>8000</span><span>9000</span></div>
          <div class="tabs">
            <svg width="618" height="21" viewBox="0 0 618 21"><g fill="#fbfbfb" stroke="#999"><path d="M344 20.500l3-13q1-2 3-2h13q2 0 3 2l5 13"/><path d="M310 20.500l3-13q1-2 3-2h23q2 0 3 2l5 13"/><path d="M285 20.500l3-13q1-2 3-2h17q2 0 3 2l5 13"/><path d="M257 20.500l3-13q1-2 3-2h20q2 0 3 2l5 13"/><path d="M231 20.500l3-13q1-2 3-2h19q2 0 3 2l5 13"/><path d="M206 20.500l3-13q1-2 3-2h17q2 0 3 2l5 13"/><path d="M181 20.500l3-13q1-2 3-2h17q2 0 3 2l5 13"/><path d="M140 20.500l3-13q1-2 3-2h33q2 0 3 2l5 13"/><path d="M115 20.500l3-13q1-2 3-2h17q2 0 3 2l5 13"/><path d="M90 20.500l3-13q1-2 3-2h17q2 0 3 2l5 13"/><path d="M65 20.500l3-13q1-2 3-2h17q2 0 3 2l5 13"/><path d="M40 20.500l3-13q1-2 3-2h17q2 0 3 2l5 13"/></g><path d="M0 20.500h4q2-5 4-11 1-4 4-4h26q2 0 3 3l4 12h573" fill="none" stroke="#666"/><circle cx="372.500" cy="11.500" r="3.500" fill="#aaa"/><path d="M370.500 11.500h4M372.500 9.500v4" stroke="#fff"/></svg>
            <div class="tl"><span style="width:50px">[audio]</span><span style="width:9px">cell</span><span style="width:41px">f_1</span><span style="width:9px">f_2</span><span style="width:41px">f_3</span><span style="width:23px">centroid</span><span style="width:42px">f_4</span><span style="width:8px">f_5</span><span style="width:44px">pinch</span><span style="width:12px">rotate</span><span style="width:42px">tap</span><span style="width:11px">swipe</span><span style="width:41px">yin</span></div>
          </div>
          <svg class="wave" width="618" height="135" viewBox="0 0 618 135"><path d="M0 0h618v135H0z" fill="#f0e6e6"/><path d="M0 11.500h617M0 17.500h617M0 33.500h617M0 45.500h617M0 50.500h617M0 56.500h617M0 78.500h617M0 84.500h617M0 89.500h617M0 101.500h617M0 118.500h617M0 123.500h617" stroke="#ddd4d4"/><path d="M0 23.500h617M0 113.500h617" stroke="#b5acac"/><path d="M0 68h615" stroke="#706664" stroke-width="2"/><path d="M1 0v135" stroke="#b0101a" stroke-width="2"/></svg>
          <div class="scroll"><i></i><i></i><i></i></div>
          <div class="tools">
            <svg viewBox="0 0 24 24"><path d="M12 20l-4-6 3 .5 4-9.500 1.500.7-4 9.300 3.500 1z" fill="#fff"/></svg>
            <svg viewBox="0 0 24 24"><path d="M8 20v-5l5.500-11 4 2L12 17z" fill="#fff"/></svg>
            <svg viewBox="0 0 24 24"><path d="M12 2l4 4.500h-2.500V10.500h4V8L22 12l-4.500 4v-2.500h-4v4H16L12 22l-4-4.500h2.500v-4h-4V16L2 12l4.500-4v2.500h4v-4H8z" fill="#fff"/></svg>
            <svg viewBox="0 0 24 24"><path d="M12 5v14" stroke="#f22020" stroke-width="2"/></svg>
            <svg class="gr" viewBox="0 0 22 22"><path d="M3.500 3.500h15v15h-15z" fill="#8a8a8a" stroke="#fff" stroke-width="1.300"/></svg>
            <svg viewBox="0 0 24 24"><path d="M5.500 12h13v7.500h-13z" fill="#fff"/><path d="M8 12V9.500a4 4 0 0 1 8 0V12" fill="none" stroke="#fff" stroke-width="2"/></svg>
            <i class="sep"></i>
            <svg viewBox="0 0 24 24"><path d="M2 13h4l1.500-3 2 6L12 4l2 15 2-10 1.500 6 1-3H22" fill="none" stroke="#fff" stroke-width="1.700"/></svg>
            <svg class="gr" viewBox="0 0 22 22"><path d="M1 8h3l1.500-3L8 9l3-6 2 7 2-6 2 5 1-2h3M1 15h3l1.500-3L8 16l3-5 2 8 2-7 2 5 1-2h3" fill="none" stroke="#fff" stroke-width="1.500"/></svg>
            <svg viewBox="0 0 24 24"><path d="M5.500 2v20M12 2v20M18.500 2v20M2 5.500h20M2 12h20M2 18.500h20" stroke="#fff" stroke-width="2.600"/></svg>
          </div>
        </div>
        <div class="pages"><b>1</b><span>2</span><span>3</span><span>4</span><span>5</span><span>6</span><span>7</span><span>8</span><span>9</span><span class="ten">10</span><em>i</em><svg width="11" height="13" viewBox="0 0 11 13"><path d="M.5.500h10v12H.5z" fill="#e8e8e8" stroke="#aaa"/><path d="M2 3.500h7M2 6.500h7M2 9.500h7" stroke="#888"/></svg></div>
      </div>
    </div>
    <div class="mright">
      <div class="gain"><svg width="16" height="55" viewBox="0 0 16 55"><path d="M0 0h5v55H0z" fill="#222"/><path d="M0 9.500h5" stroke="#ddd"/><path d="M15 31.500v9L6.500 36z" fill="#aaa" stroke="#666"/></svg><span>-40 dB</span></div>
      <div class="opts">
        <p><svg class="tog"><use href="#x"/></svg>on/off</p>
        <p><svg class="tog on"><use href="#x"/></svg>loop<svg class="plus" width="9" height="9" viewBox="0 0 9 9"><path d="M4.500 0v9M0 4.500h9" stroke="#555" stroke-width="1.300"/></svg></p>
        <p class="sp"><b>1.</b>sp</p>
      </div>
      <b class="clr">clearall</b>
    </div>
  </div>
</section>
</main>
</body>
</html>
```
FILE: styles.css
```css
* { box-sizing: border-box; margin: 0; padding: 0; }
html, body { width: 1920px; height: 1080px; overflow: hidden; background: #121212; }
body { font-family: "Liberation Sans", Arial, sans-serif; font-size: 12px; color: #222; white-space: nowrap; }
i, em { font-style: normal; }
svg { display: block; flex: none; }
.sprite { position: absolute; width: 0; height: 0; }

/* menu bar */
.menubar { display: flex; align-items: center; height: 23px; background: #1a1a1a; border-bottom: 1px solid #000; color: #f4f4f4; font: 500 13.5px/22px Inter, sans-serif; padding-left: 21px; }
.apple { width: 13px; height: 15px; margin-bottom: 2px; }
.menus { display: flex; margin-left: 20px; width: 1160px; letter-spacing: -.1px; }
.m1 { width: 62px; }
.m2 { width: 41px; }
.m3 { width: 43px; }
.m4 { width: 50px; }
.m5 { width: 37px; }
.m6 { width: 70px; }
.status { display: flex; align-items: center; flex: 1; margin-left: 21px; }
.s-mouse { margin-left: 11px; }
.mem { display: flex; flex-direction: column; width: 30px; margin-left: 8px; font: 700 8px/8px Inter, sans-serif; }
.mem span + span { font-size: 11.5px; font-weight: 600; line-height: 9px; letter-spacing: -.1px; }
.pct { font-size: 12.5px; width: 36px; letter-spacing: -.4px; }
.p1 { margin-left: 8px; }
.s-bt { margin-left: 16px; }
.s-wifi { margin-left: 14px; }
.s-air { margin-left: 13px; }
.p2 { margin-left: 13px; width: 35px; }
.clock { margin-left: 19px; width: 140px; letter-spacing: .06px; }
.s-siri { margin-left: 17px; }
.s-flag { margin-left: 14px; }
.user { margin-left: 15px; width: 89px; letter-spacing: .15px; }

/* window chrome */
.desktop { position: absolute; inset: 0; }
.win { position: absolute; overflow: hidden; border-radius: 5px; box-shadow: 0 0 0 1px #060606; }
.bar { display: flex; align-items: center; height: 22px; background: #282828; border-top: 1px solid #5c5c5c; border-bottom: 1px solid #050505; padding-left: 8px; font: 400 12.7px/20px Inter, sans-serif; color: #686868; letter-spacing: .07px; }
.bar span { padding-top: 1px; }
.bar i, .ftitle i { width: 12px; height: 12px; border-radius: 50%; background: #474747; margin-right: 8px; flex: none; }
.doc { width: 10px; height: 14px; margin-right: 7px; }

/* catart modules */
.catart { top: 23px; width: 155px; height: 327px; background: #cf6468; }
.catart .doc { margin-left: 2px; }
.cbody { padding: 1px 0 0 2px; }
.menu { display: flex; align-items: center; position: relative; width: 145px; height: 20px; background: linear-gradient(#484848, #343434); color: #fff; font-size: 9.5px; font-weight: 400; padding-left: 5px; letter-spacing: .05px; -webkit-text-stroke: .2px #fff; }
.menu em { position: absolute; left: 56px; top: 4px; color: #202020; font-size: 9.8px; -webkit-text-stroke: 0; }
.menu svg { width: 8px; height: 4px; margin-left: auto; margin-right: 6px; }
.mbox { width: 145px; height: 21px; background: linear-gradient(#424242, #505050); border: 1px solid #111; border-top: 0; padding: 8px 0 0 9px; font-size: 9.2px; line-height: 12px; color: #1f1f1f; }
.yin { display: flex; padding: 2px 0 0 6px; line-height: 16px; overflow: hidden; }
.yin span:first-child { width: 72px; }
.yin b { display: flex; align-items: center; width: 42px; height: 18px; background: #2b2b2b; color: #eee; font-size: 9.2px; padding-left: 4px; margin-right: 4px; font-weight: 400; -webkit-text-stroke: .3px #eee; }
.yin svg { width: 5px; height: 9px; color: #777; margin-right: 2px; }
.btns { display: flex; margin-top: 2px; height: 19px; }
.btns b, .imp b { background: #7a000b; color: #fff; border-radius: 5px; height: 19px; font: 400 9.3px/18px "Liberation Sans", sans-serif; padding-left: 4px; width: 36px; margin-right: 4px; -webkit-text-stroke: .2px #fff; }
.btns b:nth-child(2) { margin-right: 3px; }
.btns b:nth-child(3) { width: 34px; margin-right: 3px; }
.btns b:nth-child(4) { width: 30px; margin: 0; }
.strip { width: 147px; height: 21px; background: #2c2c2c; border: solid #3d1216; border-width: 4px 0; color: #fff; font: 900 9.3px/13px Inter, sans-serif; padding-left: 4px; letter-spacing: .05px; }
.s1 { margin-top: 2px; }
.imp { display: flex; height: 19px; line-height: 18px; font-size: 9.3px; }
.imp b { width: 40px; }
.imp span { width: 77px; color: #331416; }
.imp strong { width: 26px; background: linear-gradient(#484848, #343434); border-radius: 5px; color: #fff; padding-left: 4px; font-size: 9px; }
.wide { width: 153px; border-color: #3b0407; margin-bottom: 2px; letter-spacing: .2px; }
.lcd { height: 23px; background: #98000c; border-color: #45000a; font-size: 10.2px; line-height: 15px; letter-spacing: .15px; }
.catart .syn { width: 145px; height: 34px; border-color: #490509; letter-spacing: .2px; }
.info { width: 147px; height: 22px; margin-top: 2px; border-radius: 5px; background: linear-gradient(#474747, #363636); color: #fff; font-size: 5.9px; line-height: 7px; padding: 4px 0 0 4px; -webkit-text-stroke: .1px #fff; }
.mix { display: flex; width: 147px; height: 66px; margin-top: 2px; background: #585858; }
.lad { width: 17px; height: 58px; margin: 4px 5px 0 4px; background: repeating-linear-gradient(#4a4a4a 0 3px, #585858 3px 5px); }
.sl + .lad { margin-left: 2px; }
.sl { width: 48.500px; height: 65px; border: 1px solid #2d2d2d; background: repeating-linear-gradient(135deg, #c8dfe3 0 3px, #2d2d2d 3px 4.600px); }
.sl u { display: block; background: repeating-linear-gradient(135deg, #4d4d4d 0 3px, #2d2d2d 3px 4.600px); }
.sl::after { content: ""; display: block; height: 6px; background: #c8dfe3; border: solid #2d2d2d; border-width: 1px 0; }

/* shared patcher objects */
.bang { display: flex; align-items: center; justify-content: center; width: 24px; height: 24px; background: #2c2c2c; }
.bang::after { content: ""; width: 16px; height: 16px; border: 2px solid #505050; border-radius: 50%; }
.num { display: flex; align-items: center; width: 50px; height: 22px; background: #2b2b2b; color: #fff; padding-left: 4px; font-size: 12px; font-weight: 400; -webkit-text-stroke: .3px #fff; }
.num svg { width: 6px; height: 12px; color: #777; margin-right: 2px; }
.tog { width: 24px; height: 24px; background: #2c2c2c; color: #505050; }

/* global control */
.fire { left: 156px; top: 394px; width: 470px; height: 203px; background: #fc4a50; }
.fire .doc { margin-left: 51px; }
.fbody { display: flex; padding: 3px 0 0 13px; color: #2c1517; }
.fa p { line-height: 13px; }
.vol { width: 40px; height: 109px; border: solid #2c2c2c; border-width: 5px 0; background: #c8dfe3; }
.vol i { display: block; height: 14px; background: #505050; }
.vol b { display: block; height: 7px; border-bottom: 1px solid #2c2c2c; }
.fb { display: grid; grid-template-rows: 26px 27px 27px 24px; margin: 26px 5px 0 11px; }
.fc { width: 207px; }
.fc h2 { font: 400 12px/13px "Liberation Sans", sans-serif; margin-left: 39px; height: 26px; }
.fc div { display: flex; }
.r1 { height: 26px; line-height: 20px; padding-left: 4px; }
.r1 span { width: 123px; }
.r2 { height: 29px; line-height: 20px; padding-left: 4px; }
.r3, .r4 { height: 25px; line-height: 20px; }
.msg { width: 98px; height: 22px; background: #2b2b2b; border: 2px solid #505050; border-radius: 4px; color: #fff; font-weight: 400; line-height: 16px; padding-left: 2px; margin-right: 9px; -webkit-text-stroke: .3px #fff; }
.fd { width: 150px; }
.fd small { display: block; font-size: 9.2px; line-height: 11px; margin-left: 29px; height: 16px; }
.fd .gy { height: 18px; padding-top: 5px; }
.umenu { display: flex; align-items: center; width: 125px; height: 20px; margin-left: 25px; background: linear-gradient(#4a4a4a, #313131); color: #fff; font-size: 9.8px; padding: 0 6px 0 5px; -webkit-text-stroke: .3px #fff; }
.umenu svg { width: 8px; height: 4px; margin-left: auto; }
.port { display: flex; margin: 2px 0 2px 25px; line-height: 20px; }
.port span { width: 75px; }
.space { display: flex; line-height: 13.500px; padding-top: 0; }
.space p { width: 112px; padding-top: 3px; }
.space .tog { width: 38px; height: 38px; color: #c8dfe3; }

/* multitouch */
.mira { left: 0; top: 639px; width: 467px; height: 441px; background: #f0787b; }
.mira .doc { margin-left: 32px; }
.pad { position: relative; height: 317px; }
.pad span { position: absolute; left: 208px; top: 5px; font: 11.500px/14px "DejaVu Sans", sans-serif; color: #333; }
.mrow { display: flex; height: 42px; padding-top: 6px; color: #3a1d1e; }
.mrow .bang { width: 28px; height: 28px; }
.mrow .bang::after { width: 19px; height: 19px; }
.ws { width: 343px; height: 22px; margin: 3px 12px 0 9px; padding-left: 4px; border-radius: 5px; background: linear-gradient(#4a4a4a, #353535); color: #fff; font-weight: 400; line-height: 22px; -webkit-text-stroke: .3px #fff; }
.mrow span { display: block; margin-left: 4px; line-height: 12px; }
.mrow2 { display: flex; color: #3a1d1e; line-height: 13px; }
.mrow2 p { height: 33px; padding-left: 4px; }
.mrow2 div { width: 95px; }

/* sticky note */
.note { position: absolute; left: 811px; top: 23px; width: 355px; height: 710px; background: #a2f2fd; padding: 12px 11px 6px; }
.note div { height: 692px; background: #d7d7d7; padding-top: 6px; font-size: 12px; line-height: 14px; white-space: pre; color: #000; }
.note b { color: #111; }
.note u { text-decoration: underline dotted #f0484e 2px; text-underline-offset: 2px; text-decoration-skip-ink: none; }

/* finder */
.finder { left: 1198px; top: 23px; width: 722px; height: 421px; background: #282828; border: 1px solid #4a4a4a; border-right: 0; font-family: Inter, sans-serif; border-radius: 5px 0 0 5px; }
.ftitle { display: flex; align-items: center; height: 22px; padding-left: 7px; color: #646464; font-size: 12.7px; }
.ftitle svg { margin: 0 4px 0 221px; }
.ftools { display: flex; height: 32px; padding: 2px 0 0 7px; border-bottom: 1px solid #000; }
.tb, .views, .search { display: flex; align-items: center; justify-content: center; height: 22px; border-radius: 4px; background: #363636; flex: none; }
.back { width: 25px; margin-right: 1px; }
.fwd { width: 25px; margin-right: 110px; }
.views { width: 110px; margin-right: 8px; }
.views span { display: flex; align-items: center; justify-content: center; width: 27px; height: 22px; border-right: 1px solid #2b2b2b; }
.views span:first-child { width: 29px; }
.views .on { background: #4e4e4e; }
.views span:last-child { border: 0; padding-right: 2px; }
.grp { width: 46px; margin-right: 8px; padding-left: 4px; }
.nf { width: 38px; margin-right: 8px; padding-left: 2px; }
.search { width: 163px; margin-left: 18px; justify-content: flex-start; padding-left: 5px; color: #4c4c4c; font-size: 12.500px; }
.search svg { margin-right: 5px; }
.fmain { display: flex; height: 365px; }
aside { flex: none; width: 164px; border-right: 1px solid #000; color: #8d8d8d; font-size: 11px; font-weight: 500; padding-top: 5px; }
aside h4 { font-size: 11px; font-weight: 500; line-height: 18px; height: 17px; padding-left: 8px; }
aside p { display: flex; align-items: center; height: 22px; padding-left: 18px; }
aside p svg { width: 16px; height: 16px; margin-right: 4px; }
aside .ej { width: 9px; height: 9px; margin: 0 0 0 7px; }
aside .on { background: #474747; color: #c8c8c8; }
.ic { margin-top: 10px; }
.cols { flex: 1; min-width: 0; }
.colset { display: flex; height: 341px; overflow: hidden; background: #1c1c1c; }
.col { width: 205px; border-right: 1px solid #000; color: #dcdcdc; font-size: 12.100px; font-weight: 500; letter-spacing: -.17px; flex: none; }
.hd, .sub { font-size: 11px; font-weight: 500; padding-left: 6px; letter-spacing: 0; }
.hd { height: 23px; line-height: 22px; background: #262626; border-bottom: 1px solid #3e3e3e; margin-bottom: 2px; font-weight: 600; letter-spacing: -.1px; }
.col p { display: flex; align-items: center; height: 18px; padding: 0 1px 1px 6px; }
.col p svg { width: 16px; height: 14px; margin-right: 4px; }
.col p .ar { width: 6px; height: 8px; margin: 0 0 0 auto; color: #8c8c8c; }
.col .sel { background: #404040; }
.col .g2 { margin-top: 2px; }
.col .g3 { margin-top: 3px; }
.col .g5 { margin-top: 5px; }
.sub { border-top: 1px solid #3e3e3e; line-height: 22px; height: 23px; }
.a1 { margin-top: 6px; }
.a2 { margin-top: 2px; height: 24px; }
.b1 { margin-top: 6px; height: 24px; }
.col .mv svg { height: 10px; }
.c3 { width: 160px; border-right: 0; }
footer { display: flex; align-items: center; height: 24px; border-top: 1px solid #4b4b4b; color: #9a9a9a; font-size: 11px; font-weight: 500; padding-left: 13px; }
footer span { display: flex; align-items: center; flex: none; }
footer svg { width: 14px; height: 13px; margin-right: 4px; }
footer em { flex: none; width: 16px; text-align: center; font-size: 13px; }
footer .w1 svg { width: 12px; margin-right: 5px; }
.w1 { width: 90px; }
.w2 { width: 48px; }
.w3 { width: 51px; }
.w4 { width: 61px; }
.w5 { width: 65px; }

/* desktop labels */
.icons { position: absolute; left: 1847px; top: 466px; list-style: none; color: #fff; font: 600 12px/16px Inter, sans-serif; letter-spacing: -.15px; }
.icons li { height: 70px; }
.thumb { position: absolute; left: 1751px; top: 975px; width: 52px; height: 17px; background: #000; display: flex; padding-top: 9px; }
.thumb i { width: 12px; height: 2px; background: #a44; }
.thumb b { width: 20px; height: 2px; margin: 0 4px; background: #222; }
.thumb u { width: 12px; height: 2px; background: #aaa; }

/* performance patcher */
.perf { left: 1338px; top: 452px; width: 510px; height: 531px; background: #4d4d4d; }
.perf .doc { margin-left: 20px; }
.perf .bar { padding-left: 7px; background: #242424; letter-spacing: .1px; }
.ptools { display: flex; align-items: center; height: 34px; padding-left: 8px; color: #757575; font: 600 10.500px Inter, sans-serif; }
.zoom { width: 32px; }
.zd { width: 6px; height: 5px; margin-right: 26px; }
.pi { width: 16px; height: 22px; margin-right: 13px; }
.pi.dn { height: 27px; margin-top: 5px; }
.pb { margin-left: 17px; width: 17px; }
.pg { width: 20px; height: 19px; margin: -4px 0 0 74px; }
.pmid { display: flex; height: 441px; }
.pl { width: 33px; padding: 19px 0 0 8px; display: flex; flex-direction: column; gap: 21.100px; }
.pl svg, .pr svg, .pbot svg { width: 16px; height: 16px; }
.pr { width: 34px; padding: 16px 0 0 9px; }
.pr svg { margin-bottom: 30px; }
.pr .cam { margin-top: 65px; }
.pr .meter { width: 18px; height: 108px; margin-top: 33px; margin-bottom: 0; }
.canvas { width: 443px; background: #fff; padding-left: 5px; }
.ptabs { position: relative; display: flex; height: 23px; border: solid #000; border-width: 0 0 1px 1px; padding-left: 4px; margin-bottom: 7px; }
.ptabs span { width: 70px; height: 18px; margin-right: 4px; background: #f2f2f2; border: 1px solid #555; border-top: 0; text-align: center; font-size: 9.300px; line-height: 16px; color: #000; -webkit-text-stroke: .2px #000; }
.ptabs .lm { background: #fb0060; color: #400; -webkit-text-stroke: .2px #400; }
.bd { display: block; width: 16px; height: 16px; border-radius: 50%; background: #f9585a; color: #200; font-size: 11.500px; line-height: 16px; text-align: center; -webkit-text-stroke: .2px #200; }
.ptabs .bd { position: absolute; top: -1px; }
.n1 { left: 0; }
.n2 { left: 75px; }
.n5 { left: 156px; }
.cap { width: 434px; height: 389px; border: 1px solid #000; }
.cap h3 { font-size: 16px; line-height: 26px; height: 28px; padding-left: 4px; margin-left: 2px; border-bottom: 1px solid #444; }
.dtabs { display: flex; margin: 7px 0 0 2px; line-height: 22px; text-align: center; gap: 1px; }
.dtabs span { width: 210px; background: #64b2f4; color: #36536c; }
.dtabs b { width: 211px; background: #4d4d4d; color: #fff; }
.dm { display: flex; height: 32px; }
.dm p { width: 76px; text-align: center; line-height: 13px; }
.dm span { width: 82px; padding-top: 3px; line-height: 22px; padding-left: 1px; }
.t1 { width: 22px; height: 22px; margin: 3px 6px 0 0; background: #e8e8e8; color: #62b1f5; }
.dm div { width: 238px; height: 22px; margin-top: 3px; border-radius: 5px; background: #e8e8e8; line-height: 22px; padding-left: 4px; color: #111; }
.os { display: flex; padding-left: 12px; }
.os > svg { width: 52px; height: 52px; background: #e8e8e8; margin-right: 7px; }
.os p { line-height: 20px; padding-left: 2px; height: 20px; }
label { display: flex; align-items: center; height: 21px; }
label i { width: 14px; height: 14px; border: 2px solid #80bff7; margin-right: 8px; }
label i svg { width: 10px; height: 10px; }
.big { width: 18px; height: 18px; margin-left: 3px; background: radial-gradient(#ff1414 25%, #f85a5a 80%); line-height: 18px; }
.pbot { display: flex; align-items: center; height: 34px; padding-left: 8px; }
.pbot .q2 { margin: 0 30px 0 15px; }
.q3, .q4, .q5, .q6, .q7, .q8 { margin-right: 30px; }
.q9 { margin-right: 52px; }
.pbot .q10 { width: 23px; height: 23px; margin-right: 32px; }

/* mubu editor */
.mubu { left: 522px; top: 749px; width: 759px; height: 331px; background: #e1e1e1; }
.mubu .doc { margin-left: 213px; }
.mb { display: flex; height: 309px; }
.mleft { width: 652px; padding-left: 3px; }
.mleft h3 { font-size: 16px; line-height: 27px; height: 26px; margin-left: 4px; padding-left: 4px; border-bottom: 1px solid #444; }
.desc { padding: 7px 0 0 4px; line-height: 18px; height: 33px; }
.nm { padding-left: 4px; line-height: 18px; height: 24px; }
.nm b { display: inline-block; width: 80px; }
.ed { display: grid; grid-template-columns: 29px 618px; grid-template-rows: 210px 16px; border: solid #7d7d7d; border-width: 1px 1px 0; background: #fff; }
.gut { border-right: 1px solid #bbb; font: italic 9px/10px "DejaVu Sans", sans-serif; text-align: right; padding: 35px 3px 0 0; background: linear-gradient(#ccc, #ccc) 0 102px / 100% 1px no-repeat, linear-gradient(#999, #999) 0 169px / 100% 1px no-repeat; }
.gut span { display: block; height: 124px; }
.main { height: 210px; }
.ruler { display: flex; position: relative; height: 14px; border-bottom: 1px solid #ddd; font: italic 9.800px/12px "DejaVu Sans", sans-serif; color: #000; background: repeating-linear-gradient(90deg, #111 0 1px, transparent 1px 6.180px) 0 10px / 100% 2px no-repeat; padding-left: 32px; }
.ruler small { position: absolute; left: 1px; top: -3px; font-size: 7px; }
.ruler span { width: 61.700px; text-align: center; letter-spacing: -.2px; }
.tabs { position: relative; height: 20px; }
.tl { position: absolute; left: 0; top: 6px; display: flex; font: 8.300px/12px "DejaVu Sans", sans-serif; color: #333; letter-spacing: -.15px; }
.tl span { display: flex; justify-content: center; }
.wave { height: 135px; }
.scroll { height: 10px; border: solid #666; border-width: 1px 1px 1px 0; background: #dedede; display: flex; gap: 2px; padding: 1px 0 0 304px; }
.scroll i { width: 2px; height: 6px; background: #c3c3c3; }
.tools { display: flex; align-items: center; height: 30px; border: 1px solid #777; border-left: 0; padding-left: 2px; }
.tools svg { width: 24px; height: 24px; border-radius: 4px; background: #333; margin-right: 1px; }
.tools .gr { width: 22px; height: 22px; background: #8a8a8a; margin: 0 1px; }
.sep { width: 3px; height: 18px; border: solid #999; border-width: 0 1px; margin: 0 3px 0 3px; }
.pages { grid-column: 1 / 3; display: flex; gap: 1px; font: 9.500px/14px "DejaVu Sans", sans-serif; }
.pages b, .pages span { width: 11px; height: 14px; border: 1px solid #bbb; text-align: center; font-weight: 400; line-height: 13px; }
.pages b { background: #999; border-color: #000; }
.pages .ten { width: 17px; }
.pages em { margin-left: auto; width: 11px; height: 13px; background: #c6ccd8; border: 1px solid #999; text-align: center; font-weight: 700; line-height: 12px; }
.mright { display: grid; grid-template-columns: 46px 61px; grid-template-rows: 81px 22px; padding-top: 94px; row-gap: 0; }
.gain svg { margin-left: 24px; }
.gain span { display: block; margin: 3px 0 0 13px; font-size: 9.800px; line-height: 14px; color: #111; letter-spacing: -.1px; }
.opts { padding-top: 11px; font-size: 9.800px; margin-left: 2px; color: #111; }
.opts p { display: flex; align-items: center; height: 20px; padding-bottom: 4px; }
.opts .tog { width: 16px; height: 16px; margin-right: 3px; }
.opts .tog.on { color: #c8dfe3; }
.plus { margin: 2px 0 0 11px; }
.opts .sp { height: 18px; padding: 0; }
.sp b { width: 42px; height: 18px; margin-right: 6px; background: #2b2b2b; color: #eee; padding-left: 4px; line-height: 17px; font-size: 10px; font-weight: 400; }
.clr { width: 47px; height: 22px; margin-left: 2px; background: linear-gradient(#4c4c4c, #333); border-radius: 5px; color: #fff; line-height: 21px; text-align: center; font-size: 11.500px; font-weight: 400; -webkit-text-stroke: .3px #fff; }
```
